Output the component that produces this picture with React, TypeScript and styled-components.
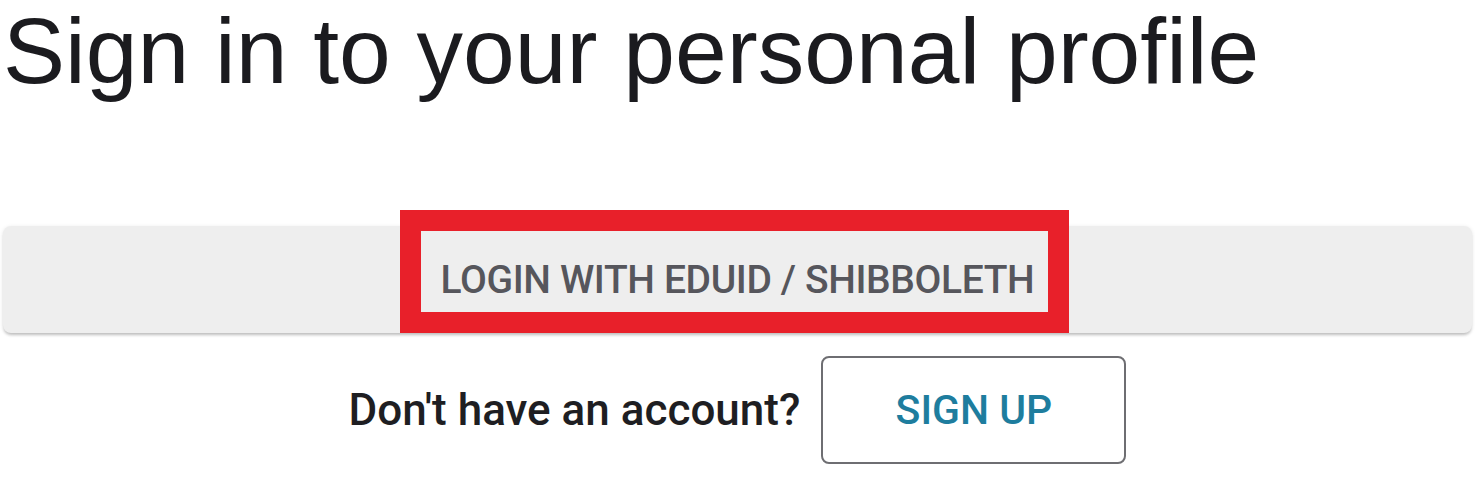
import React from 'react';
import styled, {createGlobalStyle} from 'styled-components';

const GlobalStyle = createGlobalStyle`
  html, body {
    margin: 0;
    padding: 0;
    background: #ffffff;
  }
  body {
    font-family: Roboto, "Liberation Sans", Arial, sans-serif;
  }
`;

export default function App() {
  return (
    <>
      <GlobalStyle />
      <Page>
        <Title>Sign in to your personal profile</Title>
        <LoginBar type="button">
          <Highlight aria-hidden />
          <BarLabel>Login with eduID / Shibboleth</BarLabel>
        </LoginBar>
        <SignUpRow>
          <Question>Don't have an account?</Question>
          <SignUpButton type="button">Sign up</SignUpButton>
        </SignUpRow>
      </Page>
    </>
  );
}

const Page = styled.div`
  width: 1475px;
  display: flex;
  flex-direction: column;
  padding: 5px 3px 0;
  box-sizing: border-box;
`;

const Title = styled.h1`
  margin: 0;
  font-family: "Liberation Sans", Arial, sans-serif;
  font-weight: 400;
  font-size: 93px;
  line-height: 93px;
  color: #1b1b1f;
`;

const LoginBar = styled.button`
  position: relative;
  margin-top: 128px;
  height: 107px;
  width: 100%;
  display: flex;
  align-items: center;
  justify-content: center;
  border: none;
  border-radius: 8px;
  background: #eeeeee;
  box-shadow: 0 3px 3px -1px rgba(0, 0, 0, 0.2),
    0 1px 4px rgba(0, 0, 0, 0.1);
  padding: 0;
  cursor: pointer;
`;

// red annotation frame drawn over the button
const Highlight = styled.span`
  position: absolute;
  top: -16px;
  left: calc(50% - 338px);
  width: 669px;
  height: 123px;
  box-sizing: border-box;
  border: 21px solid #e8202a;
  pointer-events: none;
`;

const BarLabel = styled.span`
  font-family: Roboto, sans-serif;
  font-weight: 500;
  font-size: 39px;
  letter-spacing: -0.01em;
  text-transform: uppercase;
  color: #56565c;
`;

const SignUpRow = styled.div`
  margin-top: 23px;
  display: flex;
  align-items: center;
  justify-content: center;
  gap: 21px;
`;

const Question = styled.span`
  font-family: Roboto, sans-serif;
  font-weight: 500;
  font-size: 44px;
  color: #1e1e22;
`;

const SignUpButton = styled.button`
  width: 305px;
  height: 108px;
  box-sizing: border-box;
  border: 2px solid #6e6e72;
  border-radius: 8px;
  background: #ffffff;
  font-family: Roboto, sans-serif;
  font-weight: 500;
  font-size: 41px;
  letter-spacing: 0;
  text-transform: uppercase;
  color: #1e7d9e;
  cursor: pointer;
`;
